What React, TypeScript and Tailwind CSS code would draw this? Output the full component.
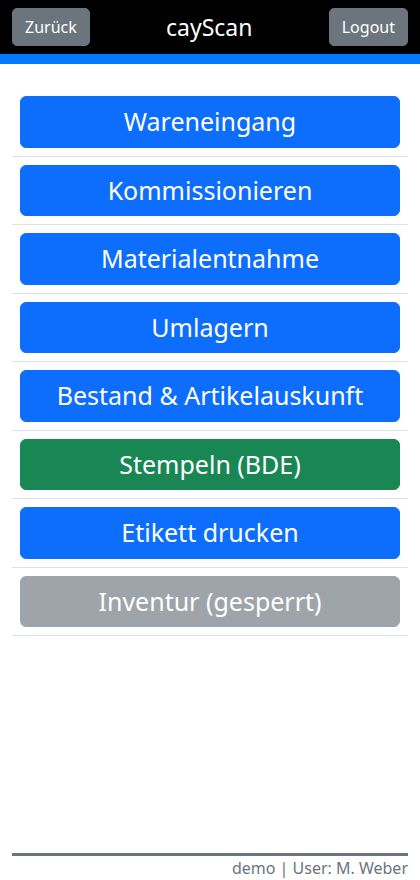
const items: { label: string; tone: "blue" | "green" | "gray" }[] = [
  { label: "Wareneingang", tone: "blue" },
  { label: "Kommissionieren", tone: "blue" },
  { label: "Materialentnahme", tone: "blue" },
  { label: "Umlagern", tone: "blue" },
  { label: "Bestand & Artikelauskunft", tone: "blue" },
  { label: "Stempeln (BDE)", tone: "green" },
  { label: "Etikett drucken", tone: "blue" },
  { label: "Inventur (gesperrt)", tone: "gray" },
];

const toneClass = {
  blue: "bg-[#0d6efd] border-[#0d6efd]",
  green: "bg-[#198754] border-[#198754]",
  gray: "bg-[#6c757d] border-[#6c757d] opacity-65",
};

export default function App() {
  return (
    <div className="flex min-h-[880px] flex-col bg-white font-['Noto_Sans',sans-serif]">
      <header className="flex h-[54px] items-center justify-between bg-black px-3">
        <button className="h-[38px] rounded-[5px] border border-[#6c757d] bg-[#6c757d] px-3 text-base text-white">
          Zurück
        </button>
        <div className="text-[23px] text-white">cayScan</div>
        <button className="h-[38px] rounded-[5px] border border-[#6c757d] bg-[#6c757d] px-3 text-base text-white">
          Logout
        </button>
      </header>
      <div className="h-[10px] bg-[#007bff]" />

      <main className="flex-1 px-3 pt-6">
        {items.map((it) => (
          <div key={it.label} className="border-b border-[#dee2e6] px-2 py-2">
            <button
              disabled={it.tone === "gray"}
              className={
                "flex h-[51.5px] w-full items-center justify-center rounded-[6px] border text-[25px] text-white " +
                toneClass[it.tone]
              }
            >
              {it.label}
            </button>
          </div>
        ))}
      </main>

      <footer className="mx-3 border-t-[3px] border-[#6c757d] text-right text-base leading-6 text-[#6c757d]">
        demo | User: M. Weber
      </footer>
    </div>
  );
}
